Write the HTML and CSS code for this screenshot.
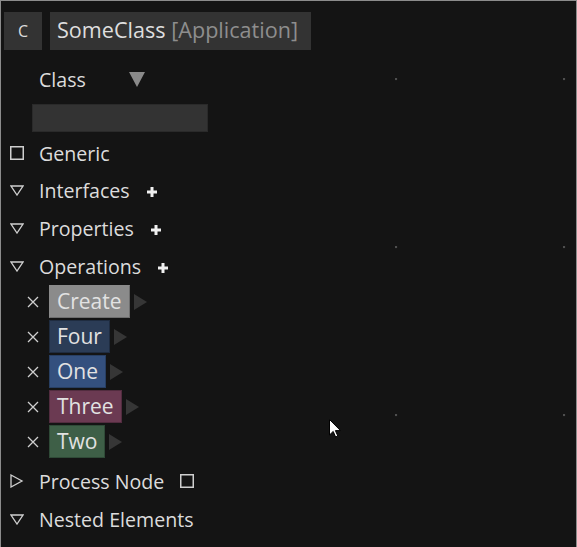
FILE: index.html
```html
<!DOCTYPE html>
<html>
<head>
<meta charset="utf-8">
<link rel="stylesheet" href="styles.css">
</head>
<body>
<div class="window">
  <div class="panel">
    <div class="header">
      <div class="kind">C</div>
      <div class="title">SomeClass <span class="stereo">[Application]</span></div>
    </div>
    <div class="class-row">
      <span class="class-label">Class</span>
      <svg class="dropdown" width="16" height="15" viewBox="0 0 16 15"><polygon points="0,0 16,0 8,15" fill="#8a8a8a"/></svg>
    </div>
    <div class="name-input"></div>
    <div class="row row-generic">
      <svg class="icon" width="14" height="14" viewBox="0 0 14 14"><rect x="0.75" y="0.75" width="12.5" height="12.5" fill="none" stroke="#cfcfcf" stroke-width="1.5"/></svg>
      <span class="label">Generic</span>
    </div>
    <div class="row">
      <svg class="icon" width="14" height="11" viewBox="0 0 14 11"><polygon points="1,1 13,1 7,10" fill="none" stroke="#cfcfcf" stroke-width="1.3" stroke-linejoin="miter"/></svg>
      <span class="label">Interfaces</span>
      <svg class="plus" width="10" height="10" viewBox="0 0 10 10"><path d="M5 0V10M0 5H10" stroke="#f0f0f0" stroke-width="3"/></svg>
    </div>
    <div class="row">
      <svg class="icon" width="14" height="11" viewBox="0 0 14 11"><polygon points="1,1 13,1 7,10" fill="none" stroke="#cfcfcf" stroke-width="1.3"/></svg>
      <span class="label">Properties</span>
      <svg class="plus" width="10" height="10" viewBox="0 0 10 10"><path d="M5 0V10M0 5H10" stroke="#f0f0f0" stroke-width="3"/></svg>
    </div>
    <div class="row">
      <svg class="icon" width="14" height="11" viewBox="0 0 14 11"><polygon points="1,1 13,1 7,10" fill="none" stroke="#cfcfcf" stroke-width="1.3"/></svg>
      <span class="label">Operations</span>
      <svg class="plus" width="10" height="10" viewBox="0 0 10 10"><path d="M5 0V10M0 5H10" stroke="#f0f0f0" stroke-width="3"/></svg>
    </div>
    <div class="ops">
      <div class="op">
        <svg class="remove" width="12" height="12" viewBox="0 0 12 12"><path d="M1 1L11 11M11 1L1 11" stroke="#d0d0d0" stroke-width="1.3"/></svg>
        <span class="chip chip-create">Create</span>
        <svg class="more" width="13" height="16" viewBox="0 0 13 16"><polygon points="0,0 13,8 0,16" fill="#363636"/></svg>
      </div>
      <div class="op">
        <svg class="remove" width="12" height="12" viewBox="0 0 12 12"><path d="M1 1L11 11M11 1L1 11" stroke="#d0d0d0" stroke-width="1.3"/></svg>
        <span class="chip chip-four">Four</span>
        <svg class="more" width="13" height="16" viewBox="0 0 13 16"><polygon points="0,0 13,8 0,16" fill="#363636"/></svg>
      </div>
      <div class="op">
        <svg class="remove" width="12" height="12" viewBox="0 0 12 12"><path d="M1 1L11 11M11 1L1 11" stroke="#d0d0d0" stroke-width="1.3"/></svg>
        <span class="chip chip-one">One</span>
        <svg class="more" width="13" height="16" viewBox="0 0 13 16"><polygon points="0,0 13,8 0,16" fill="#363636"/></svg>
      </div>
      <div class="op">
        <svg class="remove" width="12" height="12" viewBox="0 0 12 12"><path d="M1 1L11 11M11 1L1 11" stroke="#d0d0d0" stroke-width="1.3"/></svg>
        <span class="chip chip-three">Three</span>
        <svg class="more" width="13" height="16" viewBox="0 0 13 16"><polygon points="0,0 13,8 0,16" fill="#363636"/></svg>
      </div>
      <div class="op">
        <svg class="remove" width="12" height="12" viewBox="0 0 12 12"><path d="M1 1L11 11M11 1L1 11" stroke="#d0d0d0" stroke-width="1.3"/></svg>
        <span class="chip chip-two">Two</span>
        <svg class="more" width="13" height="16" viewBox="0 0 13 16"><polygon points="0,0 13,8 0,16" fill="#363636"/></svg>
      </div>
    </div>
    <div class="row row-process">
      <svg class="icon" width="14" height="14" viewBox="0 0 14 14"><polygon points="1,1 12,7 1,13" fill="none" stroke="#cfcfcf" stroke-width="1.3"/></svg>
      <span class="label">Process Node</span>
      <svg class="check-after" width="14" height="14" viewBox="0 0 14 14"><rect x="0.75" y="0.75" width="12.5" height="12.5" fill="none" stroke="#cfcfcf" stroke-width="1.5"/></svg>
    </div>
    <div class="row">
      <svg class="icon" width="14" height="11" viewBox="0 0 14 11"><polygon points="1,1 13,1 7,10" fill="none" stroke="#cfcfcf" stroke-width="1.3"/></svg>
      <span class="label">Nested Elements</span>
    </div>
  </div>
  <div class="canvas">
    <svg class="cursor" width="12" height="19" viewBox="0 0 12 19"><path d="M0.5 0.5V16L4.2 12.4L6.6 18L8.8 17L6.4 11.6H11.5Z" fill="#ffffff" stroke="#000000" stroke-width="1"/></svg>
  </div>
</div>
</body>
</html>
```

FILE: styles.css
```css
html, body {
  margin: 0;
  padding: 0;
  background: #141414;
}

.window {
  box-sizing: border-box;
  width: 577px;
  height: 547px;
  border: 1px solid #8c8c8c;
  border-bottom: none;
  display: flex;
  background: #141414;
  color: #dcdcdc;
  font-family: "Open Sans", "Noto Sans", sans-serif;
  font-size: 19.6px;
  overflow: hidden;
}

.panel {
  width: 319px;
  flex: none;
  display: flex;
  flex-direction: column;
}

.header {
  display: flex;
  gap: 8px;
  padding: 11px 0 0 3px;
}

.kind {
  width: 38px;
  height: 38px;
  background: #333333;
  color: #dcdcdc;
  font-size: 16px;
  display: flex;
  align-items: center;
  justify-content: center;
  padding-bottom: 1px;
  box-sizing: border-box;
}

.title {
  box-sizing: border-box;
  width: 261px;
  height: 38px;
  background: #333333;
  padding: 0 0 3px 7px;
  display: flex;
  align-items: center;
  font-size: 21.6px;
  white-space: pre;
  color: #dedede;
}

.stereo {
  color: #8e8e8e;
}

.class-row {
  display: flex;
  align-items: center;
  height: 32px;
  margin-top: 13px;
  padding-left: 38px;
}

.class-label {
  width: 90px;
}

.dropdown {
  display: block;
}

.name-input {
  margin: 9px 0 0 31px;
  width: 174px;
  height: 26px;
  background: #333333;
  border: 1px solid #2a2a2a;
}

.row {
  display: flex;
  align-items: center;
  height: 38px;
  padding-left: 9px;
}

.row-generic {
  height: 36px;
  margin-top: 3px;
}

.icon {
  display: block;
  width: 14px;
  flex: none;
}

.label {
  margin-left: 15px;
}

.plus {
  display: block;
  margin-left: 17px;
  margin-top: 3px;
}

.check-after {
  display: block;
  margin-left: 16px;
}

.ops {
  display: flex;
  flex-direction: column;
  gap: 2px;
}

.op {
  display: flex;
  align-items: center;
  height: 33px;
  padding-left: 26px;
}

.remove {
  display: block;
}

.chip {
  box-sizing: border-box;
  height: 33px;
  margin-left: 10px;
  padding: 0 7px 1px;
  display: flex;
  align-items: center;
  color: #e2e2e2;
  font-size: 21px;
  border: 1px solid transparent;
}

.chip-create { background: #8b8b8b; border-color: #8b8b8b #6e6e6e #6e6e6e #8b8b8b; }
.chip-four { background: #2b3c56; border-color: #1f2c40; }
.chip-one { background: #34507e; border-color: #283f63; }
.chip-three { background: #6b3a52; border-color: #522c3f; }
.chip-two { background: #3e5f47; border-color: #2f4a37; }

.more {
  display: block;
  margin-left: 4px;
}

.row-process {
  margin-top: 4px;
}

.canvas {
  flex: 1;
  position: relative;
  background-image: radial-gradient(circle at 1px 1px, #4e4e4e 1.3px, transparent 1.6px);
  background-size: 168px 168px;
  background-position: 75px 77px;
}

.cursor {
  position: absolute;
  left: 9px;
  top: 418px;
  display: block;
}
```
